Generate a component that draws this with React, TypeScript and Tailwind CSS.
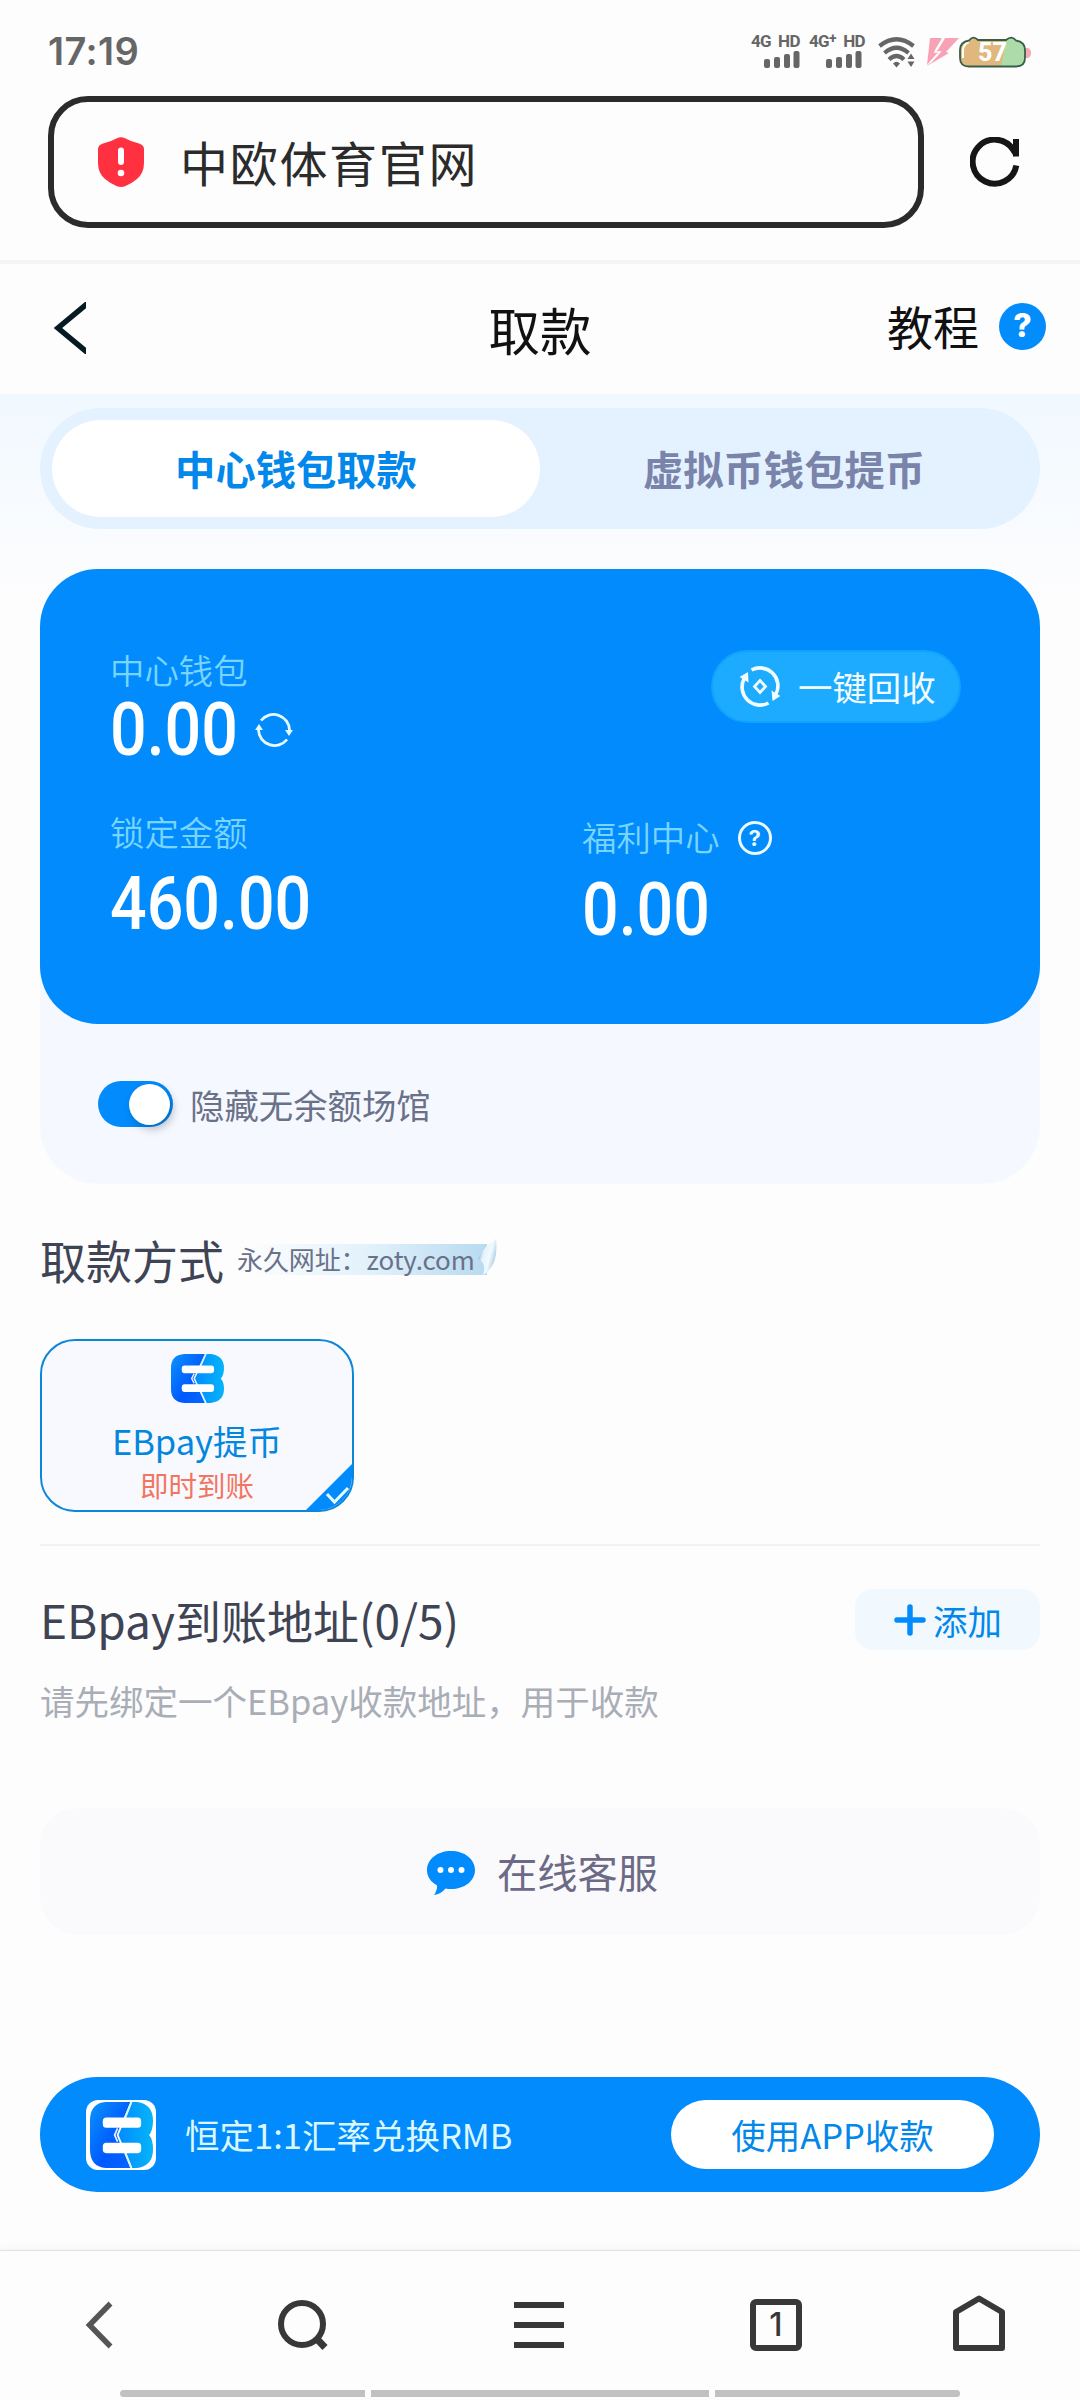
import { useState } from "react";

const CJK = "font-['Noto_Sans_CJK_SC',sans-serif]";

const amountClass =
  "inline-block origin-left scale-x-[0.86] font-[Roboto,sans-serif] text-[75px] leading-[53px] font-medium text-white";

function SignalBars() {
  return (
    <svg width="36" height="17" viewBox="0 0 36 17" fill="#666">
      <rect x="0" y="8" width="6" height="9" rx="2" />
      <rect x="10" y="6" width="6" height="11" rx="2" />
      <rect x="20" y="3" width="6" height="14" rx="2" />
      <rect x="29.5" y="0" width="6" height="17" rx="2" />
    </svg>
  );
}

function Signal({ label, plus }: { label: string; plus?: boolean }) {
  return (
    <div className="flex flex-col items-end gap-[3px]">
      <div className="flex h-[14px] items-center font-[Roboto,sans-serif] text-[17px] leading-[14px] font-bold tracking-[-0.6px] whitespace-nowrap text-[#666]">
        <span>{label}</span>
        {plus && <span className="-mt-1.5 text-[14px] leading-none">+</span>}
        <span className="ml-[7px]">HD</span>
      </div>
      <div className={plus ? "mr-[3px]" : ""}>
        <SignalBars />
      </div>
    </div>
  );
}

function WifiIcon() {
  return (
    <svg width="38" height="32" viewBox="0 0 38 32" fill="none" stroke="#666" strokeWidth="4.200">
      <path d="M1.500 9 Q18.500 -4.500 35.500 9" />
      <path d="M6.500 16 Q18.500 5.500 30.500 16" />
      <path d="M11 22.500 Q18.500 15.500 26 22.500" />
      <path d="M15 26.500 Q18.500 23 22 26.500 L18.500 30.500 Z" fill="#666" stroke="none" />
      <path d="M29.500 22 L33 16.500 L36.500 22 Z M29.500 24.500 L33 30 L36.500 24.500 Z" fill="#666" stroke="none" />
    </svg>
  );
}

function BoltIcon() {
  return (
    <svg width="33" height="28" viewBox="0 0 33 28" fill="#f7a3b5">
      <path d="M4 0 L16 0 L9 12 L13 13 L1 27 Z" />
      <path d="M19 0 L33 0 L20 14 L23 15 L1 28 L12 17 L10 15 Z" />
      <path d="M18 0 L9 14 L14 14 L4 25" fill="none" stroke="#fff" strokeWidth="1.500" />
    </svg>
  );
}

function BatteryIcon() {
  return (
    <svg width="72" height="32" viewBox="0 0 72 32">
      <path d="M66 12 h3 q3 1 3 5 q0 4 -3 5 h-3 z" fill="#f5a9b0" />
      <path
        d="M10 4.500 Q14 -1 19 4 L47 4 Q53 -1 57 4.500 Q66 6 66 14 L66 22 Q66 30.500 57 30.500 L10 30.500 Q1 30.500 1 22 L1 14 Q1 6 10 4.500 Z"
        fill="#addba9"
      />
      <path d="M10 4.500 Q14 0 19 4 L47 4 L42 30.500 L10 30.500 Q1 30.500 1 22 L1 14 Q1 6 10 4.500 Z" fill="#e0b77c" />
      <path d="M4 22 V14 Q4.500 8 10 6" fill="none" stroke="#fff" strokeWidth="2" />
      <path
        d="M10 4.500 Q14 -1 19 4 L47 4 Q53 -1 57 4.500 Q66 6 66 14 L66 22 Q66 30.500 57 30.500 L10 30.500 Q1 30.500 1 22 L1 14 Q1 6 10 4.500 Z"
        fill="none"
        stroke="#37604a"
        strokeWidth="1.800"
      />
      <text x="33.500" y="24.500" textAnchor="middle" fontFamily="Roboto, sans-serif" fontWeight="800" fontSize="25" fill="#fff">
        57
      </text>
    </svg>
  );
}

function StatusBar() {
  return (
    <div className="flex h-24 items-start justify-between pt-[34px] pr-[49px] pl-[48px]">
      <div className="mt-[2px] font-[Inter,sans-serif] text-[38px] leading-[30px] font-semibold tracking-[0.4px] text-[#666]">
        17:19
      </div>
      <div className="flex items-start">
        <Signal label="4G" />
        <div className="ml-[9px]">
          <Signal label="4G" plus />
        </div>
        <div className="mt-[3px] ml-[13px]">
          <WifiIcon />
        </div>
        <div className="mt-[4px] ml-[10px]">
          <BoltIcon />
        </div>
        <div className="mt-[2px]">
          <BatteryIcon />
        </div>
      </div>
    </div>
  );
}

function AddressBar() {
  return (
    <div className="flex h-[168px] items-start border-b-4 border-[#f5f5f5] pl-12">
      <div className="flex h-[132px] w-[876px] items-center rounded-[40px] border-[6px] border-[#2b2b2b] pl-[44px]">
        <svg width="46" height="50" viewBox="0 0 46 50">
          <path
            d="M19 1.200 Q23 -0.600 27 1.200 Q34 5 41 6.500 Q46 8 46 12 V26 Q46 36 39 42 Q33 47 27 49.300 Q23 50.600 19 49.300 Q13 47 7 42 Q0 36 0 26 V12 Q0 8 5 6.500 Q12 5 19 1.200 Z"
            fill="#ff3040"
          />
          <path d="M23 13.500 V25" stroke="#fff" strokeWidth="6" strokeLinecap="round" />
          <circle cx="23" cy="36" r="3.300" fill="#fff" />
        </svg>
        <span className="mb-[3px] ml-[36px] text-[48px] leading-none tracking-[1.700px] text-[#2b2b2b]">中欧体育官网</span>
      </div>
      <svg className="mt-[41px] ml-[46px]" width="50" height="50" viewBox="0 0 50 50" fill="none" stroke="#161616" strokeWidth="6">
        <path d="M46.300 28.500 A22 22 0 1 1 43 12.500 L46.500 18" />
        <path d="M46 2 V19.500" />
      </svg>
    </div>
  );
}

function PageHeader() {
  return (
    <div className="grid h-[130px] grid-cols-3 items-center pb-[2px]">
      <svg className="ml-[54px]" width="32" height="52" viewBox="0 0 32 52" fill="none" stroke="#061a24" strokeWidth="5.500">
        <path d="M34 1 L4 26 L34 51" />
      </svg>
      <h1 className="pt-[2px] text-center text-[51.5px] leading-none text-[#111]">取款</h1>
      <div className="flex items-center justify-end pr-[34px]">
        <span className="mt-[-7px] text-[46px] leading-none text-[#111]">教程</span>
        <span className="mt-[-4px] ml-[20px] flex size-[47px] items-center justify-center rounded-full bg-[#028cfc] font-[Inter,sans-serif] text-[32px] font-extrabold text-white">
          ?
        </span>
      </div>
    </div>
  );
}

function Tabs({ tab, onChange }: { tab: number; onChange: (i: number) => void }) {
  const tabs = ["中心钱包取款", "虚拟币钱包提币"];
  return (
    <div className="flex h-[121px] rounded-full bg-[#e4f2ff] p-3">
      {tabs.map((name, i) => (
        <button
          key={name}
          onClick={() => onChange(i)}
          className={`flex-1 rounded-full text-[40.3px] leading-none font-bold ${
            tab === i ? "bg-white text-[#0287ea]" : "text-[#7a83a9]"
          }`}
        >
          {name}
        </button>
      ))}
    </div>
  );
}

function RefreshIcon() {
  return (
    <svg className="-mt-[4px] -ml-px" width="38" height="36" viewBox="0 0 38 36" fill="none" stroke="#e6fbff" strokeWidth="2.800">
      <path d="M6 8.500 A16 16 0 0 1 34.500 18" />
      <path d="M32 27.500 A16 16 0 0 1 3.500 18" />
      <path d="M30 18 H38 L34 24 Z M0 18 H8 L4 12 Z" fill="#e6fbff" stroke="none" />
    </svg>
  );
}

function RecycleIcon() {
  return (
    <svg width="40" height="41" viewBox="0 0 40 41" fill="none" stroke="#f2fcff" strokeWidth="3.600">
      <path d="M11.500 4 A18 18 0 0 1 36 28" />
      <path d="M28.500 37 A18 18 0 0 1 4 13" />
      <path d="M31.500 24.500 L40.500 30 L32.500 35 Z M-0.500 11 L8 6 L8.500 16.500 Z" fill="#f2fcff" stroke="none" />
      <path d="M20 14.500 L25.500 20.500 L20 26.500 L14.500 20.500 Z" strokeWidth="2.800" />
    </svg>
  );
}

function WalletCard() {
  return (
    <div className="flex h-[455px] flex-col rounded-[58px] bg-[#028bfd] px-[70px] pt-[83px]">
      <div className="flex h-[162px] items-start justify-between">
        <div>
          <p className="text-[34.4px] leading-[34px] font-[350] text-[#78d5ff]">中心钱包</p>
          <div className="mt-[17px] flex items-center">
            <div className="w-[146px]">
              <span className={amountClass}>0.00</span>
            </div>
            <RefreshIcon />
          </div>
        </div>
        <button className="mt-[-2px] mr-[9px] flex h-[73px] w-[250px] items-center rounded-full border-2 border-[#0fa2ff] bg-[#1cabff] pl-[27px]">
          <RecycleIcon />
          <span className="ml-[18px] text-[34.4px] leading-none text-[#f2fcff]">一键回收</span>
        </button>
      </div>
      <div className="flex">
        <div className="w-[472px]">
          <p className="text-[34.4px] leading-[34px] font-[350] text-[#78d5ff]">锁定金额</p>
          <div className="mt-[29px]">
            <span className={amountClass}>460.00</span>
          </div>
        </div>
        <div className="pt-[2px]">
          <div className="flex items-center">
            <p className="text-[34.4px] leading-[34px] font-[350] text-[#78d5ff]">福利中心</p>
            <span className="mt-[5px] ml-[18px] flex size-[34px] items-center justify-center rounded-full border-[3px] border-[#eafaff] font-[Inter,sans-serif] text-[22px] leading-none font-bold text-[#eafaff]">
              ?
            </span>
          </div>
          <div className="mt-[28px]">
            <span className={amountClass}>0.00</span>
          </div>
        </div>
      </div>
    </div>
  );
}

function EBLogo({ id, width, height }: { id: string; width: number; height: number }) {
  return (
    <svg width={width} height={height} viewBox="0 0 64 60" preserveAspectRatio="none">
      <defs>
        <linearGradient id={`${id}-e`} x1="0" y1="0" x2="1" y2="1">
          <stop offset="0" stopColor="#0a94fb" />
          <stop offset="0.600" stopColor="#0059ff" />
          <stop offset="1" stopColor="#0668ff" />
        </linearGradient>
        <linearGradient id={`${id}-b`} x1="0" y1="0" x2="1" y2="0">
          <stop offset="0" stopColor="#008cff" />
          <stop offset="1" stopColor="#06b4f8" />
        </linearGradient>
      </defs>
      <path d="M16 0 H41 L27 30 L41 60 H16 Q0 59 0 43 V17 Q0 1 16 0 Z" fill={`url(#${id}-e)`} />
      <path d="M43 0 H48 Q64 2 64 17 Q64 26 60 30 Q64 34 64 43 Q64 58 48 60 H43 L29 30 Z" fill={`url(#${id}-b)`} />
      <path d="M42 0 L36 14 M28 24 L25 30 L28 36 M36 46 L42 60" stroke="#d8f4ff" strokeWidth="1.800" fill="none" />
      <rect x="13" y="14" width="39" height="9.500" rx="3.500" fill="#fff" />
      <rect x="13" y="37" width="39" height="9.500" rx="3.500" fill="#fff" />
    </svg>
  );
}

function PaymentMethods() {
  return (
    <section className="h-[362px] border-b-2 border-[#f2f2f4]">
      <div className="flex h-[155px] items-start pt-[52px]">
        <h2 className="text-[46px] leading-none text-[#3f4454]">取款方式</h2>
        <div className="relative mt-[8px] ml-[13px] flex h-[31px] w-[260px] items-center">
          <div className="absolute top-0 left-[10px] h-full w-[240px] bg-linear-to-r from-[#fdfdfe] via-[#e2f2fb] to-[#b8daf0]" />
          <svg className="absolute top-[-5px] right-0" width="24" height="38" viewBox="0 0 24 38">
            <defs>
              <linearGradient id="curl" x1="0" y1="0" x2="1" y2="0.500">
                <stop offset="0.200" stopColor="#8fb9d6" />
                <stop offset="0.400" stopColor="#e4f3fb" />
                <stop offset="0.700" stopColor="#f2faff" />
                <stop offset="1" stopColor="#a9cbe0" />
              </linearGradient>
            </defs>
            <path d="M14 6 H24 V38 H14 Z" fill="#fdfdfe" />
            <path d="M23 0 Q12 6 5 20 Q14 24 10 36 Q26 27 23 0 Z" fill="url(#curl)" />
          </svg>
          <span className="relative mt-[-2px] text-[26px] leading-none tracking-[-0.1px] whitespace-nowrap text-[#6b7189]">
            永久网址：zoty.com
          </span>
        </div>
      </div>
      <button className="relative flex h-[173px] w-[314px] flex-col items-center overflow-hidden rounded-[35px] border-2 border-[#0c87d8] bg-[#f8f9ff] pt-[13px]">
        <EBLogo id="m" width={53} height={49} />
        <span className="mt-[20px] text-[34.5px] leading-[34px] text-[#0287dd]">EBpay提币</span>
        <span className="mt-[14px] text-[28.500px] leading-[28px] text-[#f2765f]">即时到账</span>
        <svg className="absolute right-[-2px] bottom-[-2px]" width="50" height="50" viewBox="0 0 50 50">
          <path d="M50 0 V50 H0 Z" fill="#028bfd" />
          <path d="M23 32 L30.500 40 L44 26" fill="none" stroke="#e6fbff" strokeWidth="3" />
        </svg>
      </button>
    </section>
  );
}

function PayoutAddress() {
  return (
    <section className="h-[262px] pt-[43px]">
      <div className="flex h-[61px] items-center justify-between">
        <h2 className="mt-[-2px] text-[46px] leading-none text-[#3f4454]">EBpay到账地址(0/5)</h2>
        <button className="flex h-[61px] w-[185px] items-center rounded-[18px] bg-[#f1f9fe] pl-[39px]">
          <svg width="32" height="32" viewBox="0 0 32 32" stroke="#028bfd" strokeWidth="5.500" strokeLinecap="round">
            <path d="M16 3 V29 M3 16 H29" />
          </svg>
          <span className="mt-[2px] ml-[7px] text-[34.4px] leading-none text-[#0287ea]">添加</span>
        </button>
      </div>
      <p className="mt-[33px] text-[34.5px] leading-[34px] text-[#a9adb6]">请先绑定一个EBpay收款地址，用于收款</p>
    </section>
  );
}

function CustomerService() {
  return (
    <button className="flex h-[127px] w-full items-center justify-center rounded-[38px] bg-[#fafafc] pt-[2px] pl-[5px]">
      <svg width="48" height="44" viewBox="0 0 48 44">
        <path
          d="M24 0 C37.500 0 48 8 48 19 C48 30 37.500 38 24 38 C22 38 20 37.900 18.500 37.500 Q14 43 7 44 Q10.500 39 10 34.500 C4 31 0 26 0 19 C0 8 10.500 0 24 0 Z"
          fill="#028bfd"
        />
        <circle cx="13.500" cy="19" r="3" fill="#fff" />
        <circle cx="24" cy="19" r="3" fill="#fff" />
        <circle cx="34.500" cy="19" r="3" fill="#fff" />
      </svg>
      <span className="mt-[-2px] ml-[22px] text-[40.300px] leading-none text-[#6c6a86]">在线客服</span>
    </button>
  );
}

function AppBanner() {
  return (
    <div className="mt-[142px] flex h-[115px] items-center rounded-full bg-[#028bfd] pr-[46px] pl-[46px]">
      <div className="flex size-[70px] items-center justify-center rounded-[12px] bg-white">
        <EBLogo id="b" width={63} height={66} />
      </div>
      <span className="ml-[29px] text-[34.5px] leading-none text-[#dcf8ff]">恒定1:1汇率兑换RMB</span>
      <button className="ml-auto h-[69px] w-[323px] rounded-full bg-white text-[34.5px] leading-none text-[#0287ea]">
        使用APP收款
      </button>
    </div>
  );
}

function BottomNav() {
  return (
    <nav className="mt-auto h-[150px] border-t border-[#e2e2e2] bg-[#fdfdfd] shadow-[0_-2px_8px_rgba(0,0,0,0.04)]">
      <div className="flex h-[139px] items-start justify-between pt-[44px] pr-[75px] pl-[85px]">
        <svg className="mt-[6px]" width="28" height="48" viewBox="0 0 28 48" fill="none" stroke="#555" strokeWidth="5.500">
          <path d="M25.500 2.500 L4.500 24 L25.500 45.500" />
        </svg>
        <svg className="mt-[5px] ml-[165px]" width="50" height="50" viewBox="0 0 50 50" fill="none" stroke="#383838" strokeWidth="6">
          <circle cx="24" cy="24" r="21" />
          <path d="M38 38 L47 47.500" strokeWidth="7" />
        </svg>
        <svg className="mt-[7px] ml-[186px]" width="50" height="46" viewBox="0 0 50 46" stroke="#383838" strokeWidth="6">
          <path d="M0 3 H50 M0 23 H50 M0 43 H50" />
        </svg>
        <div className="mt-[4px] ml-[186px] flex h-[52px] w-[52px] items-center justify-center rounded-[6px] border-[6px] border-[#383838] font-[Inter,sans-serif] text-[32px] leading-none font-medium text-[#383838]">
          1
        </div>
        <svg className="ml-auto" width="52" height="57" viewBox="0 0 52 57" fill="none" stroke="#383838" strokeWidth="6" strokeLinejoin="round">
          <path d="M3 17 L26 3.500 L49 17 V53 H3 Z" />
        </svg>
      </div>
      <div className="mx-auto flex h-[7px] w-[840px] gap-[6px]">
        <div className="w-[245px] rounded-l-full bg-[#c1c1c1]" />
        <div className="flex-1 bg-[#c1c1c1]" />
        <div className="w-[245px] rounded-r-full bg-[#c1c1c1]" />
      </div>
    </nav>
  );
}

export default function App() {
  const [tab, setTab] = useState(0);
  const [hideEmpty, setHideEmpty] = useState(true);

  return (
    <div className={`flex h-[2400px] w-[1080px] flex-col overflow-hidden bg-[#fdfdfe] ${CJK}`}>
      <StatusBar />
      <AddressBar />
      <PageHeader />

      <main className="bg-linear-to-b from-[#f0f8ff] to-[#fdfdfe] bg-[length:100%_200px] bg-no-repeat px-10 pt-[14px]">
        <Tabs tab={tab} onChange={setTab} />

        {/* Wallet */}
        <div className="mt-10 h-[615px] rounded-[58px] bg-[#f5f9ff]">
          <WalletCard />
          <div className="flex items-center pt-[57px] pl-[58px]">
            <button
              onClick={() => setHideEmpty(!hideEmpty)}
              className={`flex h-[46px] w-[75px] items-center rounded-full px-[3px] ${
                hideEmpty ? "justify-end bg-[#028bfd]" : "bg-gray-300"
              }`}
            >
              <span className="size-[41px] rounded-full bg-white shadow-[3px_4px_9px_rgba(0,0,0,0.25)]" />
            </button>
            <span className="mt-px ml-[17px] text-[34.4px] leading-none text-[#6b7189]">隐藏无余额场馆</span>
          </div>
        </div>

        <PaymentMethods />
        <PayoutAddress />
        <CustomerService />
        <AppBanner />
      </main>

      <BottomNav />
    </div>
  );
}
